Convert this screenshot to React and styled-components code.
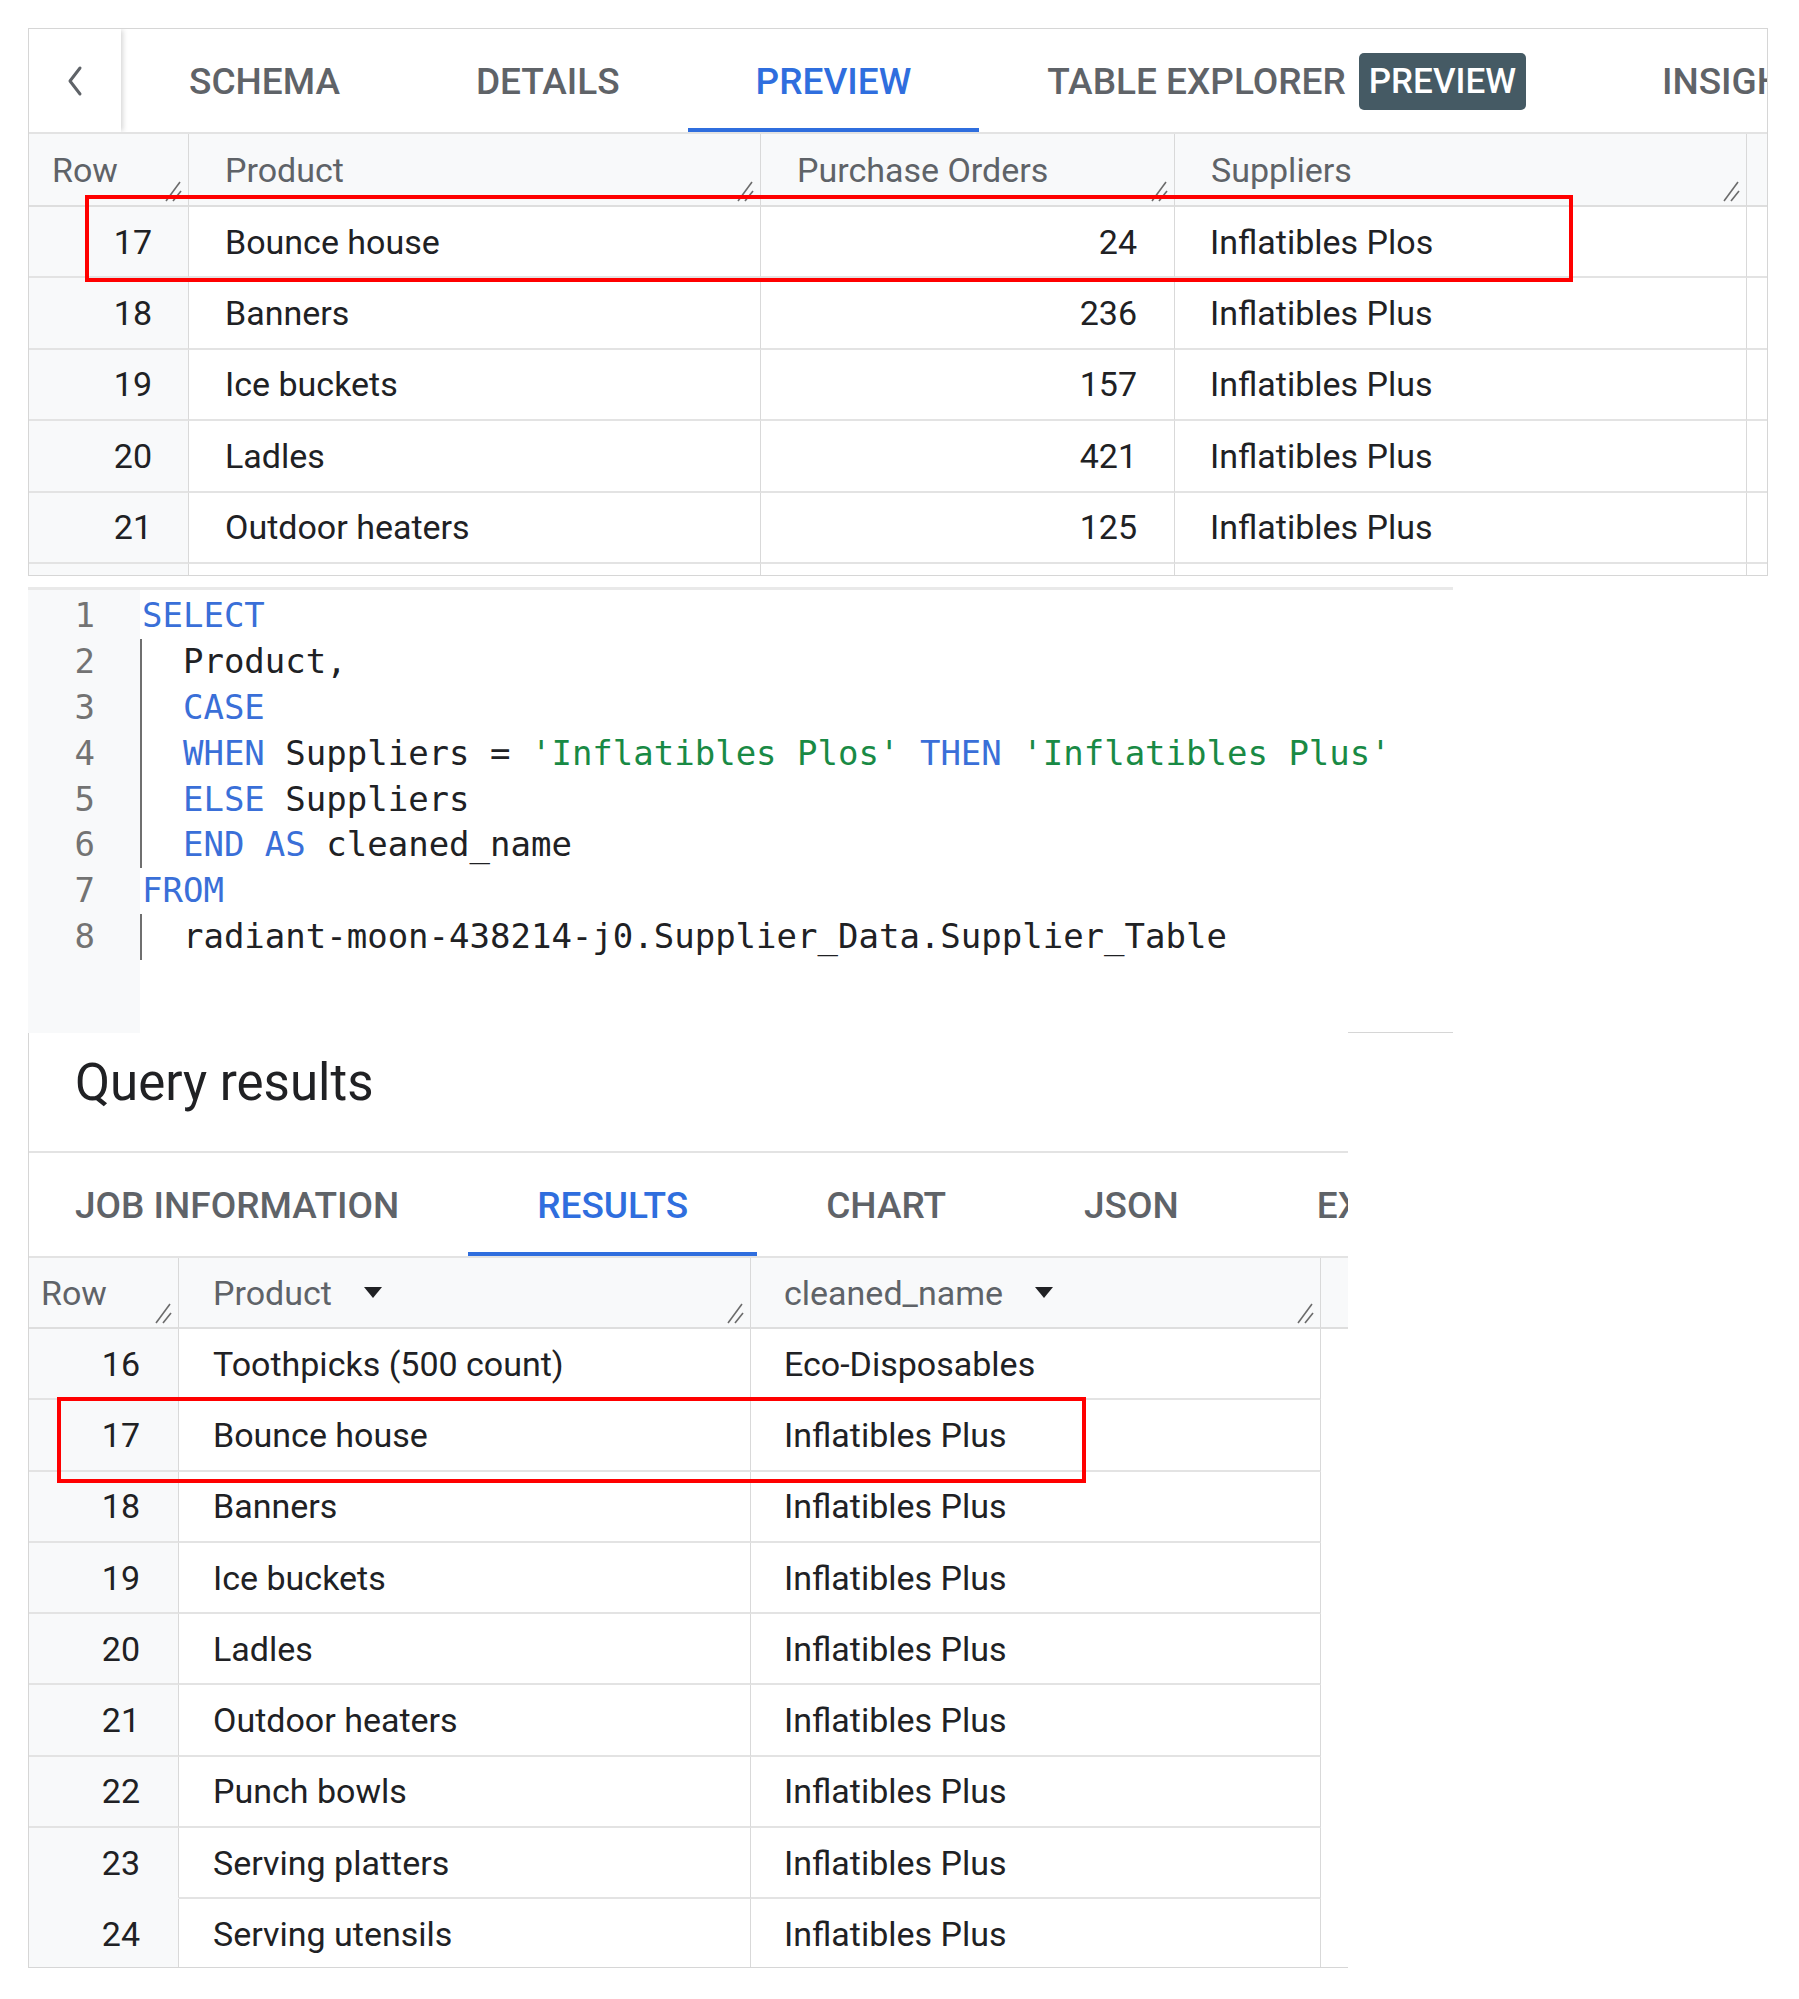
import React from 'react';
import styled, { createGlobalStyle } from 'styled-components';

const GlobalStyle = createGlobalStyle`
  html, body { margin: 0; padding: 0; background: #ffffff; }
  body { font-family: Roboto, "Liberation Sans", Arial, sans-serif; color: #202124; }
  *, *::before, *::after { box-sizing: border-box; }
`;

const BLUE = '#2f6ede';

const Page = styled.div`
  width: 1799px;
  padding: 28px 0 32px 28px;
  display: flex;
  flex-direction: column;
  align-items: flex-start;
`;

/* ---------- top panel ---------- */
const TopPanel = styled.section`
  width: 1740px;
  height: 548px;
  border: 1px solid #d6d6d6;
  display: flex;
  flex-direction: column;
  overflow: hidden;
  background: #fff;
`;

const TabBar = styled.nav`
  --tab-pad: ${p => p.$tabPad ?? 69}px;
  flex: none;
  height: ${p => p.$h}px;
  display: flex;
  align-items: stretch;
  border-bottom: 2px solid #e3e3e3;
  white-space: nowrap;
  overflow: hidden;
`;

const BackButton = styled.div`
  flex: none;
  width: 92px;
  display: flex;
  align-items: center;
  justify-content: center;
  background: #fff;
  box-shadow: 3px 0 5px -1px rgba(0, 0, 0, 0.16);
  position: relative;
  z-index: 1;
`;

const Tab = styled.div`
  flex: none;
  display: flex;
  align-items: center;
  padding: 2px var(--tab-pad) 0;
  font-size: 37px;
  font-weight: 500;
  color: ${p => (p.$active ? BLUE : '#5f6368')};
  box-shadow: ${p => (p.$active ? `inset 0 -4px 0 ${BLUE}` : 'none')};
  &:first-child { padding-left: ${p => p.$first ?? 69}px; }
`;

const Badge = styled.span`
  display: inline-flex;
  align-items: center;
  height: 57px;
  margin-left: 13px;
  padding: 0 10px;
  border-radius: 5px;
  background: #455a64;
  color: #ffffff;
  font-size: 35px;
  font-weight: 500;
`;

/* ---------- tables ---------- */
const TableWrap = styled.div`
  position: relative;
  flex: 1;
  overflow: hidden;
`;

const Grid = styled.div`
  display: grid;
  grid-template-columns: ${p => p.$cols};
  grid-template-rows: ${p => p.$head}px;
  grid-auto-rows: ${p => p.$row}px;
`;

const Cell = styled.div`
  display: flex;
  align-items: center;
  justify-content: ${p => (p.$right ? 'flex-end' : 'flex-start')};
  padding: 0 ${p => p.$padR ?? 36}px 0 ${p => p.$padL ?? 36}px;
  font-size: 34px;
  color: #202124;
  background: ${p => (p.$shade ? '#f8f9fa' : '#ffffff')};
  border-right: 1px solid ${p => (p.$noRight ? 'transparent' : '#d9d9d9')};
  border-bottom: 2px solid ${p => (p.$noLine ? 'transparent' : '#e3e3e3')};
  white-space: nowrap;
  overflow: hidden;
`;

const HeadCell = styled(Cell)`
  position: relative;
  color: #5f6368;
  background: #f8f9fa;
  border-bottom-color: #dedede;
  overflow: visible;
`;

const Handle = styled.svg`
  position: absolute;
  right: 4px;
  bottom: 2px;
`;

const Caret = styled.svg`
  flex: none;
  margin-left: 32px;
`;

const Highlight = styled.div`
  position: absolute;
  left: ${p => p.$x}px;
  top: ${p => p.$y}px;
  width: ${p => p.$w}px;
  height: ${p => p.$h}px;
  border: 4px solid #ff0000;
  pointer-events: none;
  z-index: 2;
`;

const ResizeHandle = () => (
  <Handle width="24" height="23" viewBox="0 0 24 23">
    <line x1="20" y1="2" x2="6" y2="21" stroke="#6b6b6b" strokeWidth="1.6" />
    <line x1="21" y1="11" x2="13" y2="21" stroke="#6b6b6b" strokeWidth="1.6" />
  </Handle>
);

const DropCaret = () => (
  <Caret width="18" height="11" viewBox="0 0 18 11">
    <path d="M0 0 L18 0 L9 11 Z" fill="#202124" />
  </Caret>
);

/* ---------- editor ---------- */
const Editor = styled.section`
  width: 1425px;
  height: 446px;
  margin-top: 11px;
  border-top: 3px solid #e9e9e9;
  display: flex;
  background: #fff linear-gradient(#d6d6d6, #d6d6d6) no-repeat right bottom / 105px 1px;
`;

const Gutter = styled.div`
  flex: none;
  width: 112px;
  padding-top: 3px;
  background: #f8f9fa;
  display: flex;
  flex-direction: column;
`;

const LineNo = styled.div`
  height: 45.9px;
  line-height: 45.9px;
  padding-right: 45px;
  text-align: right;
  font-family: "DejaVu Sans Mono", "Liberation Mono", monospace;
  font-size: 34px;
  color: #737373;
`;

const CodeArea = styled.div`
  flex: 1;
  padding-top: 3px;
  display: flex;
  flex-direction: column;
`;

const CodeLine = styled.div`
  height: 45.9px;
  line-height: 45.9px;
  white-space: pre;
  font-family: "DejaVu Sans Mono", "Liberation Mono", monospace;
  font-size: 34px;
  color: #202124;
  border-left: 2px solid ${p => (p.$guide ? '#6f6f6f' : 'transparent')};
`;

const Tok = styled.span`
  color: ${p => (p.$k === 'kw' ? '#3a6fd8' : p.$k === 'str' ? '#198a45' : '#202124')};
`;

/* ---------- query results ---------- */
const Results = styled.section`
  width: 1320px;
  height: 935px;
  border-left: 1px solid #d6d6d6;
  border-bottom: 1px solid #d6d6d6;
  display: flex;
  flex-direction: column;
  overflow: hidden;
  background: #fff;
`;

const TitleBar = styled.header`
  flex: none;
  height: 120px;
  padding: 20px 0 0 46px;
  border-bottom: 2px solid #e3e3e3;
`;

const Title = styled.h2`
  margin: 0;
  font-size: 51px;
  line-height: 60px;
  font-weight: 400;
  color: #202124;
`;

/* ---------- data ---------- */
const topRows = [
  ['17', 'Bounce house', '24', 'Inflatibles Plos'],
  ['18', 'Banners', '236', 'Inflatibles Plus'],
  ['19', 'Ice buckets', '157', 'Inflatibles Plus'],
  ['20', 'Ladles', '421', 'Inflatibles Plus'],
  ['21', 'Outdoor heaters', '125', 'Inflatibles Plus'],
  ['', '', '', ''],
];

const resultRows = [
  ['16', 'Toothpicks (500 count)', 'Eco-Disposables'],
  ['17', 'Bounce house', 'Inflatibles Plus'],
  ['18', 'Banners', 'Inflatibles Plus'],
  ['19', 'Ice buckets', 'Inflatibles Plus'],
  ['20', 'Ladles', 'Inflatibles Plus'],
  ['21', 'Outdoor heaters', 'Inflatibles Plus'],
  ['22', 'Punch bowls', 'Inflatibles Plus'],
  ['23', 'Serving platters', 'Inflatibles Plus'],
  ['24', 'Serving utensils', 'Inflatibles Plus'],
];

const code = [
  { guide: false, toks: [['kw', 'SELECT']] },
  { guide: true, toks: [['t', '  Product,']] },
  { guide: true, toks: [['t', '  '], ['kw', 'CASE']] },
  {
    guide: true,
    toks: [
      ['t', '  '], ['kw', 'WHEN'], ['t', ' Suppliers = '], ['str', "'Inflatibles Plos'"],
      ['t', ' '], ['kw', 'THEN'], ['t', ' '], ['str', "'Inflatibles Plus'"],
    ],
  },
  { guide: true, toks: [['t', '  '], ['kw', 'ELSE'], ['t', ' Suppliers']] },
  { guide: true, toks: [['t', '  '], ['kw', 'END'], ['t', ' '], ['kw', 'AS'], ['t', ' cleaned_name']] },
  { guide: false, toks: [['kw', 'FROM']] },
  { guide: true, toks: [['t', '  radiant-moon-438214-j0.Supplier_Data.Supplier_Table']] },
];

const Chevron = () => (
  <svg width="20" height="32" viewBox="0 0 20 32">
    <path d="M15 3 L5 16 L15 29" fill="none" stroke="#5f6368" strokeWidth="3" strokeLinecap="round" strokeLinejoin="round" />
  </svg>
);

export default function App() {
  return (
    <>
      <GlobalStyle />
      <Page>
        <TopPanel>
          <TabBar $h={105} $tabPad={68}>
            <BackButton>
              <Chevron />
            </BackButton>
            <Tab>SCHEMA</Tab>
            <Tab>DETAILS</Tab>
            <Tab $active>PREVIEW</Tab>
            <Tab>
              TABLE EXPLORER<Badge>PREVIEW</Badge>
            </Tab>
            <Tab>INSIGHTS</Tab>
          </TabBar>
          <TableWrap>
            <Grid $cols="160px 572px 414px 572px 1fr" $head={73} $row={71.4}>
              <HeadCell $padL={23}>Row<ResizeHandle /></HeadCell>
              <HeadCell>Product<ResizeHandle /></HeadCell>
              <HeadCell>Purchase Orders<ResizeHandle /></HeadCell>
              <HeadCell>Suppliers<ResizeHandle /></HeadCell>
              <HeadCell $noRight />
              {topRows.map((r, i) => (
                <React.Fragment key={i}>
                  <Cell $shade $right>{r[0]}</Cell>
                  <Cell>{r[1]}</Cell>
                  <Cell $right $padR={37}>{r[2]}</Cell>
                  <Cell $padL={35}>{r[3]}</Cell>
                  <Cell $noRight />
                </React.Fragment>
              ))}
            </Grid>
            <Highlight $x={56} $y={61} $w={1488} $h={87} />
          </TableWrap>
        </TopPanel>

        <Editor>
          <Gutter>
            {code.map((_, i) => (
              <LineNo key={i}>{i + 1}</LineNo>
            ))}
          </Gutter>
          <CodeArea>
            {code.map((line, i) => (
              <CodeLine key={i} $guide={line.guide}>
                {line.toks.map(([k, t], j) => (
                  <Tok key={j} $k={k}>{t}</Tok>
                ))}
              </CodeLine>
            ))}
          </CodeArea>
        </Editor>

        <Results>
          <TitleBar>
            <Title>Query results</Title>
          </TitleBar>
          <TabBar $h={105}>
            <Tab $first={46}>JOB INFORMATION</Tab>
            <Tab $active>RESULTS</Tab>
            <Tab>CHART</Tab>
            <Tab>JSON</Tab>
            <Tab>EXECUTION DETAILS</Tab>
          </TabBar>
          <TableWrap>
            <Grid $cols="150px 572px 570px 1fr" $head={71} $row={71.3}>
              <HeadCell $padL={12}>Row<ResizeHandle /></HeadCell>
              <HeadCell $padL={34}>Product<DropCaret /><ResizeHandle /></HeadCell>
              <HeadCell $padL={33}>cleaned_name<DropCaret /><ResizeHandle /></HeadCell>
              <HeadCell $noRight />
              {resultRows.map((r, i) => (
                <React.Fragment key={i}>
                  <Cell $shade $right $padR={38} $noLine={i === 7}>{r[0]}</Cell>
                  <Cell $padL={34}>{r[1]}</Cell>
                  <Cell $padL={33}>{r[2]}</Cell>
                  <Cell $noRight $noLine />
                </React.Fragment>
              ))}
            </Grid>
            <Highlight $x={28} $y={139} $w={1029} $h={86} />
          </TableWrap>
        </Results>
      </Page>
    </>
  );
}
